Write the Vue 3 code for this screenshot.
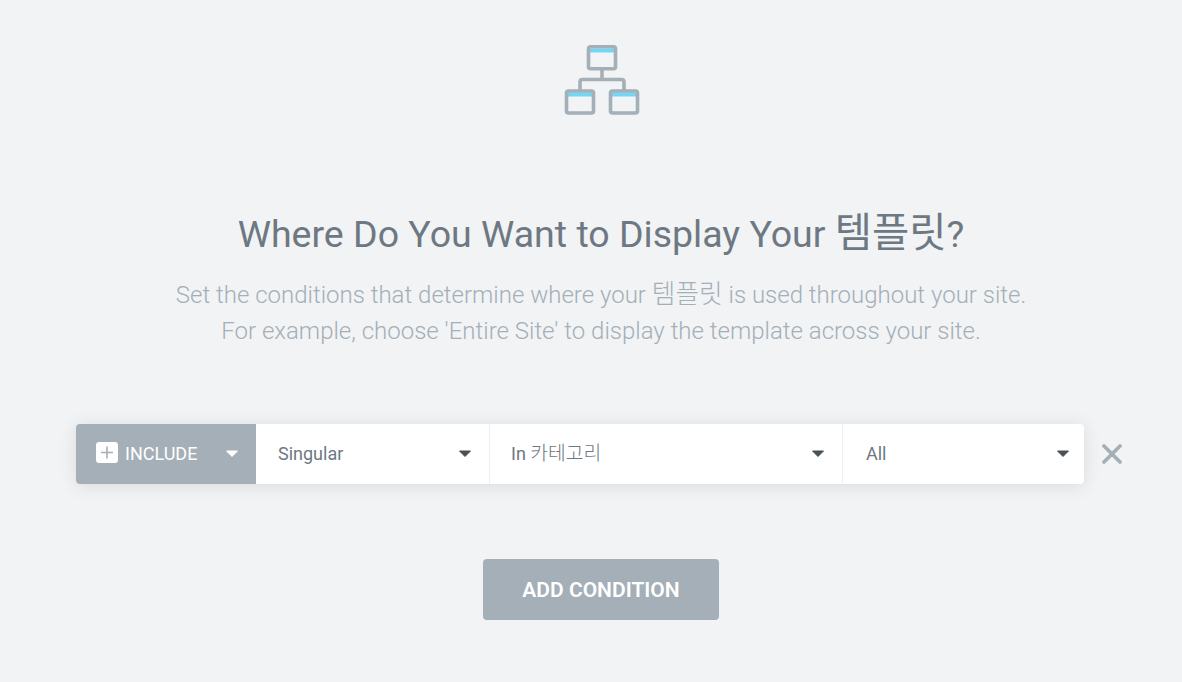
<template>
  <div class="conditions">
    <svg class="sitemap" width="76" height="71" viewBox="0 0 76 71" fill="none">
      <path class="accent" d="M25 6.500h26M3 50.500h26M47 50.500h26" />
      <g class="lines">
        <rect x="24.500" y="2.800" width="27" height="22" rx="2" />
        <rect x="2.500" y="47" width="27" height="22" rx="2" />
        <rect x="46.500" y="47" width="27" height="22" rx="2" />
        <path d="M38 25v10.500M16 46.500V38q0-2.500 2.500-2.500h39q2.500 0 2.500 2.500v8.500" />
      </g>
    </svg>
    <h1>Where Do You Want to Display Your <span class="ko">템플릿</span>?</h1>
    <p class="description">
      Set the conditions that determine where your <span class="ko">템플릿</span> is used throughout your site.<br />
      For example, choose 'Entire Site' to display the template across your site.
    </p>
    <div class="condition-row">
      <div class="controls">
        <button class="include" type="button">
          <svg class="plus" width="22" height="22" viewBox="0 0 22 22">
            <rect width="22" height="21" rx="3" fill="#fff" />
            <path d="M11 4.500v12M5 10.500h12" stroke="#a4afb7" stroke-width="1.600" />
          </svg>
          <span class="label">INCLUDE</span>
          <svg class="caret" width="14" height="8" viewBox="0 0 14 8">
            <path d="M1.500 1h11L7 6.500z" />
          </svg>
        </button>
        <button
          v-for="field in fields"
          :key="field.name"
          type="button"
          class="select"
          :class="field.name"
        >
          <span class="label">{{ field.label }}<span class="ko">{{ field.korean }}</span></span>
          <svg class="caret" width="14" height="8" viewBox="0 0 14 8">
            <path d="M1.500 1h11L7 6.500z" />
          </svg>
        </button>
      </div>
      <button class="remove" type="button" aria-label="Remove">
        <svg width="20" height="20" viewBox="0 0 20 20">
          <path d="M2 2l16 16M18 2L2 18" stroke="#a4afb7" stroke-width="3.700" stroke-linecap="round" />
        </svg>
      </button>
    </div>
    <button class="add" type="button">ADD CONDITION</button>
  </div>
</template>

<script setup>
import { ref } from 'vue'

const fields = ref([
  { name: 'type', label: 'Singular', korean: '' },
  { name: 'category', label: 'In ', korean: '카테고리' },
  { name: 'item', label: 'All', korean: '' }
])
</script>

<style>
body {
  background: #f1f3f5;
}
</style>

<style scoped>
.conditions {
  box-sizing: border-box;
  width: 1182px;
  height: 682px;
  padding-top: 44px;
  overflow: hidden;
  display: flex;
  flex-direction: column;
  align-items: center;
  background: #f1f3f5;
  font-family: Roboto, "Noto Sans CJK KR", sans-serif;
}

.sitemap {
  margin-left: 22px;
}

.lines {
  stroke: #a4afb7;
  stroke-width: 3.6;
}

.accent {
  stroke: #71d7f7;
  stroke-width: 4;
}

h1 {
  height: 50px;
  margin: 94px 0 0 20px;
  color: #6d7882;
  font-size: 37.5px;
  font-weight: 400;
  line-height: 50px;
  white-space: nowrap;
}

.ko {
  font-size: 1.07em;
  font-weight: 300;
  line-height: 1;
}

h1 .ko {
  font-size: 1.08em;
  font-weight: 400;
}

.description {
  height: 72px;
  margin: 18px 0 0 20px;
  color: #a4afb7;
  font-size: 24px;
  font-weight: 300;
  line-height: 36px;
  text-align: center;
  white-space: nowrap;
}

.condition-row {
  display: flex;
  align-items: center;
  align-self: flex-start;
  margin: 75px 0 0 76px;
}

button {
  box-sizing: border-box;
  border: 0;
  padding: 0;
  background: none;
  font-family: inherit;
}

.controls {
  display: flex;
  width: 1008px;
  height: 60px;
  overflow: hidden;
  border-radius: 4px;
  background: #fff;
  box-shadow: 0 2px 18px rgba(0, 0, 0, 0.1);
}

.include,
.select {
  display: flex;
  align-items: center;
  color: #6d7882;
  font-size: 18px;
  white-space: pre;
}

.include {
  width: 180px;
  padding: 0 17px 0 20px;
  background: #a4afb7;
  color: #fff;
}

.label {
  height: 22px;
  line-height: 22px;
}

.plus {
  margin: 0 7px 2px 0;
}

.caret {
  margin-left: auto;
  fill: #495157;
  stroke: #495157;
  stroke-linejoin: round;
}

.include .caret {
  fill: #fff;
  stroke: #fff;
}

.select {
  padding: 0 17px 0 22px;
  border-left: 1px solid #eef0f2;
}

.type {
  width: 233px;
  border-left: 0;
}

.category {
  width: 353px;
  padding-left: 21px;
}

.item {
  width: 242px;
  padding: 0 14px 0 23px;
}

.remove {
  display: flex;
  margin: 0 0 1px 18px;
}

.add {
  width: 236px;
  height: 61px;
  margin: 75px 0 0 20px;
  border-radius: 4px;
  background: #a4afb7;
  color: #fff;
  font-size: 21px;
  font-weight: 600;
}
</style>
